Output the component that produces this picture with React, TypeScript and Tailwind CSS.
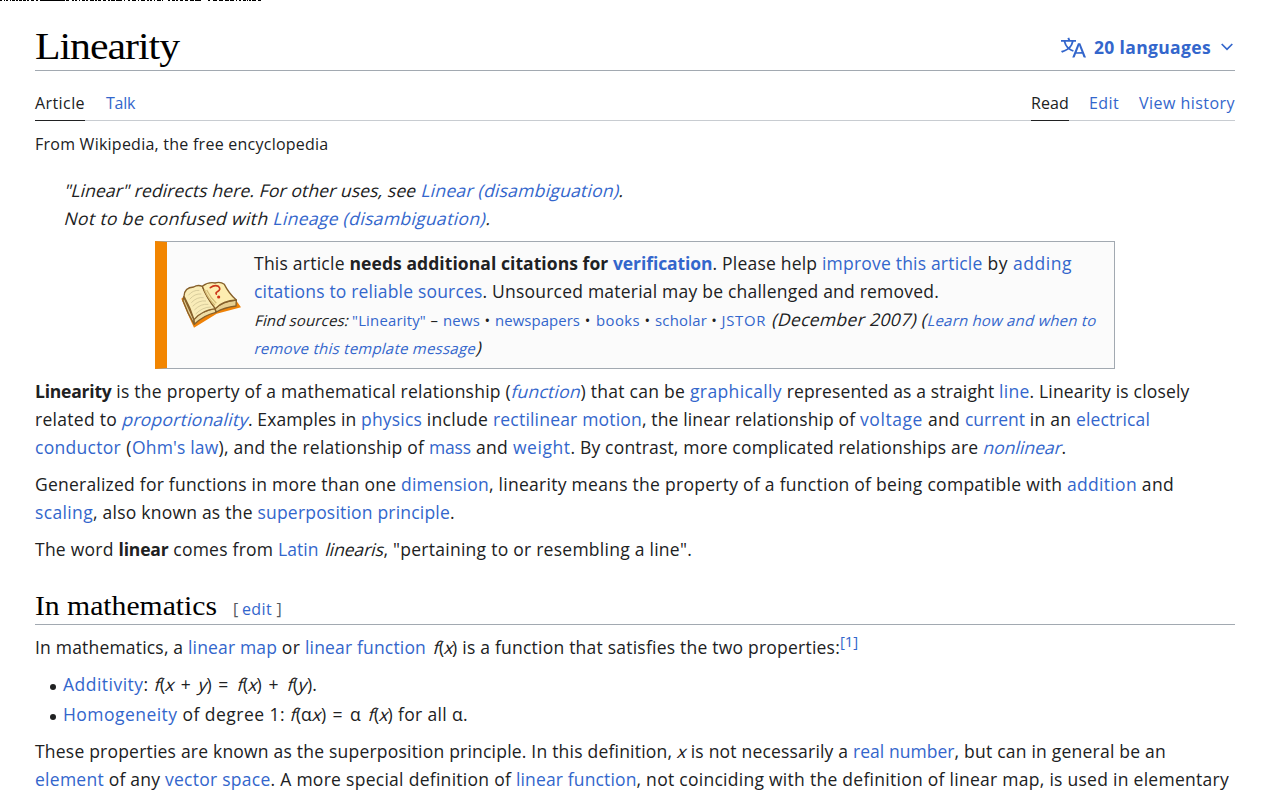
import { useLayoutEffect, useRef } from "react";

type Kind = "text" | "link" | "bold" | "boldLink" | "italic" | "italicLink" | "small" | "smallLink" | "smallItalic" | "smallItalicLink" | "sup";
type Segment = [text: string, end: number, kind?: Kind];

const kinds: Record<Kind, string> = {
  text: "",
  link: "text-[#3366cc]",
  bold: "font-bold",
  boldLink: "font-bold text-[#3366cc]",
  italic: "origin-[0_17px] -skew-x-[15deg]",
  italicLink: "origin-[0_17px] -skew-x-[15deg] text-[#3366cc]",
  small: "text-[14.9px]",
  smallLink: "text-[14.9px] text-[#3366cc]",
  smallItalic: "text-[14.9px] origin-[0_19px] -skew-x-[15deg]",
  smallItalicLink: "text-[14.9px] origin-[0_17px] -skew-x-[15deg] text-[#3366cc]",
  sup: "text-[15px] text-[#3366cc] -translate-y-[7px]",
};

/** A run of text whose tracking is adjusted so that it fills the given width. */
function Fit({ text, width, className = "" }: { text: string; width: number; className?: string }) {
  const ref = useRef<HTMLSpanElement>(null);
  useLayoutEffect(() => {
    const el = ref.current;
    if (!el) return;
    el.style.width = "max-content";
    el.style.letterSpacing = "0px";
    const natural = parseFloat(getComputedStyle(el).width);
    el.style.width = `${width}px`;
    el.style.letterSpacing = `${(width - natural) / text.length}px`;
  }, [text, width]);
  return (
    <span ref={ref} className={`block shrink-0 whitespace-pre ${className}`}>
      {text}
    </span>
  );
}

function Line({ start = 35, parts }: { start?: number; parts: Segment[] }) {
  return (
    <div className="flex h-7 items-baseline leading-[26px]">
      {parts.map(([text, end, kind = "text"], i) => (
        <Fit key={i} text={text} width={end - (i ? parts[i - 1][1] : start)} className={kinds[kind]} />
      ))}
    </div>
  );
}

const stripe = [
  [0, 2], [4, 1], [6, 2], [10, 1], [12, 3], [16, 2], [19, 3], [23, 3], [27, 2], [31, 3], [36, 2], [40, 25], [66, 3],
  [72, 2], [75, 2], [79, 1], [82, 3], [86, 2], [90, 4], [95, 2], [98, 3], [103, 3], [108, 2], [111, 4], [116, 6],
  [124, 1], [128, 2], [132, 4], [138, 1], [141, 4], [147, 2], [150, 2], [154, 1], [157, 4], [162, 1], [168, 2],
  [172, 3], [176, 2], [180, 3], [185, 3], [190, 4], [195, 6], [208, 2], [213, 4], [219, 4], [225, 4], [230, 4],
  [236, 1], [239, 2], [243, 3], [247, 1], [249, 2], [252, 4], [258, 3],
];

function BookIcon() {
  return (
    <svg className="block" width="80" height="65" viewBox="0 0 240 195" fill="none" strokeLinejoin="round">
      <path d="M28 86 L38 78 L126 112 L193 92 L207 112 L134 131 L66 173 Q47 133 28 86Z" fill="#ef8207" />
      <path d="M35 80 L66 149 L66 162 Q47 130 33 92Z" fill="#e6cf91" stroke="#86602b" strokeWidth="4" />
      <path d="M66 146 Q88 124 129 115 L132 127 Q94 136 67 163Z" fill="#eedda5" stroke="#86602b" strokeWidth="4" />
      <path d="M129 116 Q151 94 193 90 L192 108 Q157 112 133 126Z" fill="#e7cf92" stroke="#86602b" strokeWidth="4" />
      <path d="M36 79 Q37 52 65 51 Q77 43 91 49 Q101 77 130 116 Q91 120 66 149 Q55 113 36 79Z" fill="#f9ecb8" stroke="#86602b" strokeWidth="4" />
      <path d="M91 49 Q109 35 129 39 Q145 34 157 43 Q171 71 193 90 Q153 91 130 116 Q103 82 91 49Z" fill="#fdedb0" stroke="#86602b" strokeWidth="4" />
      <path d="M49 76 Q62 60 82 61 M53 88 Q68 70 88 72 M58 98 Q75 80 95 83 M62 109 Q80 90 102 93 M67 120 Q87 100 109 103 M71 132 Q92 111 117 111" stroke="#d8cc9c" strokeWidth="3" />
      <path d="M98 60 Q109 86 129 106 M104 60 Q116 84 133 100" stroke="#d6be78" strokeWidth="4" />
      <path d="M115 53 Q128 43 139 49 Q149 58 136 65 Q130 68 133 72" stroke="#ca3519" strokeWidth="5" strokeLinecap="round" />
      <circle cx="140" cy="81" r="4.8" fill="#cf3418" />
    </svg>
  );
}

export default function App() {
  return (
    <div className="h-[800px] w-[1280px] overflow-hidden bg-white font-['Open_Sans',sans-serif] text-[17.5px] leading-7 text-[#202122]">
      <svg className="block" width="1280" height="1" shapeRendering="crispEdges">
        {stripe.map(([x, w]) => (
          <rect key={x} x={x} width={w} height="1" fill="#000" />
        ))}
      </svg>
      <main className="mx-[35px] w-[1200px]">
        <header className="flex h-[70px] items-start justify-between border-b border-[#a2a9b1]">
          <h1 className="pt-[23px] font-['Liberation_Serif',serif] text-[38px] leading-[45px] text-black">
            <Fit text="Linearity" width={131} className="origin-left scale-x-110" />
          </h1>
          <button className="flex items-center pt-[32px] pr-[2px] text-[#3366cc]">
            <svg width="25" height="25" viewBox="0 0 20 20" fill="currentColor">
              <path d="M20 18h-1.44a.61.61 0 0 1-.4-.12.81.81 0 0 1-.23-.31L17 15h-5l-1 2.54a.77.77 0 0 1-.22.3.59.59 0 0 1-.4.14H9l4.55-11.47h1.89zm-3.53-4.31L14.89 9.5a11.62 11.62 0 0 1-.39-1.24q-.09.37-.19.69l-.19.56-1.58 4.19zm-6.3-1.58a13.43 13.43 0 0 1-2.91-1.41 11.46 11.46 0 0 0 2.81-5.37H12V4H7.31a4 4 0 0 0-.2-.56C6.87 2.79 6.6 2 6.6 2l-1.47.5s.4.89.6 1.5H0v1.33h2.15A11.23 11.23 0 0 0 5 10.7a17.19 17.19 0 0 1-5 2.1q.56.82.87 1.38a23.28 23.28 0 0 0 5.22-2.51 15.64 15.64 0 0 0 3.56 1.77zM3.63 5.33h4.91a8.11 8.11 0 0 1-2.45 4.45 9.11 9.11 0 0 1-2.46-4.45z" />
            </svg>
            <span className="ml-2 font-bold">
              <Fit text="20 languages" width={117} />
            </span>
            <svg className="ml-[10px]" width="12" height="8" viewBox="0 0 12 8" fill="none" stroke="currentColor" strokeWidth="1.7">
              <path d="M.7 1 6 6.4 11.3 1" />
            </svg>
          </button>
        </header>

        <nav className="flex h-[50px] justify-between border-b border-[#c8ccd1] text-[16px]">
          <div className="flex gap-5">
            <div className="h-[50px] border-b border-[#202122] pt-[18px]">
              <Fit text="Article" width={50} />
            </div>
            <div className="pt-[18px] pl-px text-[#3366cc]">
              <Fit text="Talk" width={29} />
            </div>
          </div>
          <div className="flex gap-5">
            <div className="h-[50px] border-b border-[#202122] pt-[18px]">
              <Fit text="Read" width={38} />
            </div>
            <div className="pt-[18px] text-[#3366cc]">
              <Fit text="Edit" width={30} />
            </div>
            <div className="pt-[18px] text-[#3366cc]">
              <Fit text="View history" width={96} />
            </div>
          </div>
        </nav>

        <div className="pt-[9px] text-[16px]">
          <Fit text="From Wikipedia, the free encyclopedia" width={293.5} />
        </div>

        <div className="mt-[19px] pl-[29px]">
          <Line start={64} parts={[['"Linear" redirects here. For other uses, see ', 420.5, "italic"], ["Linear (disambiguation)", 618.5, "italicLink"], [".", 623, "italic"]]} />
          <Line start={64} parts={[["Not to be confused with ", 273, "italic"], ["Lineage (disambiguation)", 485.5, "italicLink"], [".", 490, "italic"]]} />
        </div>

        <aside className="mx-auto mt-2 flex h-32 w-[960px] border border-l-[12px] border-[#a2a9b1] border-l-[#f28500] bg-[#fbfbfb]">
          <div className="mt-7 ml-[5px] w-[82px] shrink-0">
            <BookIcon />
          </div>
          <div className="pt-2">
            <Line start={254} parts={[["This article ", 349.5], ["needs additional citations for ", 613, "bold"], ["verification", 712.5, "boldLink"], [". Please help ", 822], ["improve this article", 982.5, "link"], [" by ", 1013], ["adding", 1072, "link"]]} />
            <Line start={254} parts={[["citations to reliable sources", 482.5, "link"], [". Unsourced material may be challenged and removed.", 939]]} />
            <Line start={254} parts={[["Find sources: ", 352, "smallItalic"], ['"Linearity"', 426, "smallLink"], [" – ", 443, "small"], ["news", 480, "smallLink"], [" • ", 495, "small"], ["newspapers", 580, "smallLink"], [" • ", 596, "small"], ["books", 640, "smallLink"], [" • ", 655, "small"], ["scholar", 707, "smallLink"], [" • ", 721.5, "small"], ["JSTOR", 766, "smallLink"], [" ", 772], ["(December 2007) (", 927, "italic"], ["Learn how and when to", 1096, "smallItalicLink"]]} />
            <Line start={254} parts={[["remove this template message", 475.5, "smallItalicLink"], [")", 481, "italic"]]} />
          </div>
        </aside>

        <div className="mt-[9px]">
          <Line parts={[["Linearity", 111.5, "bold"], [" is the property of a mathematical relationship (", 511], ["function", 580.5, "italicLink"], [") that can be ", 690], ["graphically", 782, "link"], [" represented as a straight ", 999], ["line", 1029.5, "link"], [". Linearity is closely", 1189.5]]} />
          <Line parts={[["related to ", 122], ["proportionality", 248, "italicLink"], [". Examples in ", 361], ["physics", 422, "link"], [" include ", 493], ["rectilinear motion", 642, "link"], [", the linear relationship of ", 860], ["voltage", 923, "link"], [" and ", 965], ["current", 1025, "link"], [" in an ", 1076], ["electrical", 1150, "link"]]} />
          <Line parts={[["conductor", 121, "link"], [" (", 132], ["Ohm's law", 218.5, "link"], ["), and the relationship of ", 429], ["mass", 471, "link"], [" and ", 513], ["weight", 570.5, "link"], [". By contrast, more complicated relationships are ", 983], ["nonlinear", 1061.5, "italicLink"], [".", 1066]]} />
        </div>
        <div className="mt-[9px]">
          <Line parts={[["Generalized for functions in more than one ", 401], ["dimension", 489, "link"], [", linearity means the property of a function of being compatible with ", 1067], ["addition", 1137, "link"], [" and", 1174]]} />
          <Line parts={[["scaling", 93, "link"], [", also known as the ", 257.5], ["superposition principle", 450, "link"], [".", 454.5]]} />
        </div>
        <div className="mt-[9px]">
          <Line parts={[["The word ", 118.5], ["linear", 168.5, "bold"], [" comes from ", 278], ["Latin", 318.5, "link"], [" ", 325], ["linearis", 383.5, "italic"], [', "pertaining to or resembling a line".', 692]]} />
        </div>

        <h2 className="mt-5 flex h-[41px] items-baseline border-b border-[#a2a9b1] pt-1 leading-9">
          <span className="w-[182px] font-['Liberation_Serif',serif] text-[27px] text-black">
            <Fit text="In mathematics" width={165.5} className="origin-left scale-x-110" />
          </span>
          <span className="ml-4 flex text-[16px] text-[#54595d]">
            <Fit text="[ " width={9} />
            <span className="text-[#3366cc]">
              <Fit text="edit" width={30} />
            </span>
            <Fit text=" ]" width={10} />
          </span>
        </h2>

        <div className="mt-[9px]">
          <Line parts={[["In mathematics, a ", 188], ["linear map", 277, "link"], [" or ", 305], ["linear function", 426, "link"], [" ", 432.5], ["f", 439, "italic"], ["(", 443.5], ["x", 452, "italic"], [")", 457.5], [" is a function that satisfies the two properties:", 840], ["[1]", 858, "sup"]]} />
        </div>

        <ul className="mt-[9px] flex flex-col gap-0.5">
          <li className="flex items-center gap-[7px] pl-[15px]">
            <span className="mt-[3px] size-[6px] rounded-full bg-[#202122]" />
            <Line start={63} parts={[["Additivity", 143.5, "link"], [": ", 154], ["f", 160, "italic"], ["(", 165], ["x", 175, "italic"], [" + ", 198], ["y", 206.5, "italic"], [")", 211.5], [" = ", 237], ["f", 243, "italic"], ["(", 248], ["x", 256.5, "italic"], [")", 262], [" + ", 287], ["f", 293, "italic"], ["(", 298], ["y", 307, "italic"], [").", 317]]} />
          </li>
          <li className="flex items-center gap-[7px] pl-[15px]">
            <span className="mt-[3px] size-[6px] rounded-full bg-[#202122]" />
            <Line start={63} parts={[["Homogeneity", 177.5, "link"], [" of degree 1: ", 290], ["f", 296, "italic"], ["(", 301], ["α", 312], ["x", 321, "italic"], [")", 326.5], [" = α ", 368], ["f", 374, "italic"], ["(", 379], ["x", 387.5, "italic"], [")", 393], [" for all α.", 468]]} />
          </li>
        </ul>

        <div className="mt-[9px]">
          <Line parts={[["These properties are known as the superposition principle. In this definition, ", 677], ["x", 686, "italic"], [" is not necessarily a ", 853], ["real number", 954.5, "link"], [", but can in general be an", 1166]]} />
          <Line parts={[["element", 104, "link"], [" of any ", 165], ["vector space", 270.5, "link"], [". A more special definition of ", 516], ["linear function", 636.5, "link"], [", not coinciding with the definition of linear map, is used in elementary", 1229]]} />
        </div>
      </main>
    </div>
  );
}
